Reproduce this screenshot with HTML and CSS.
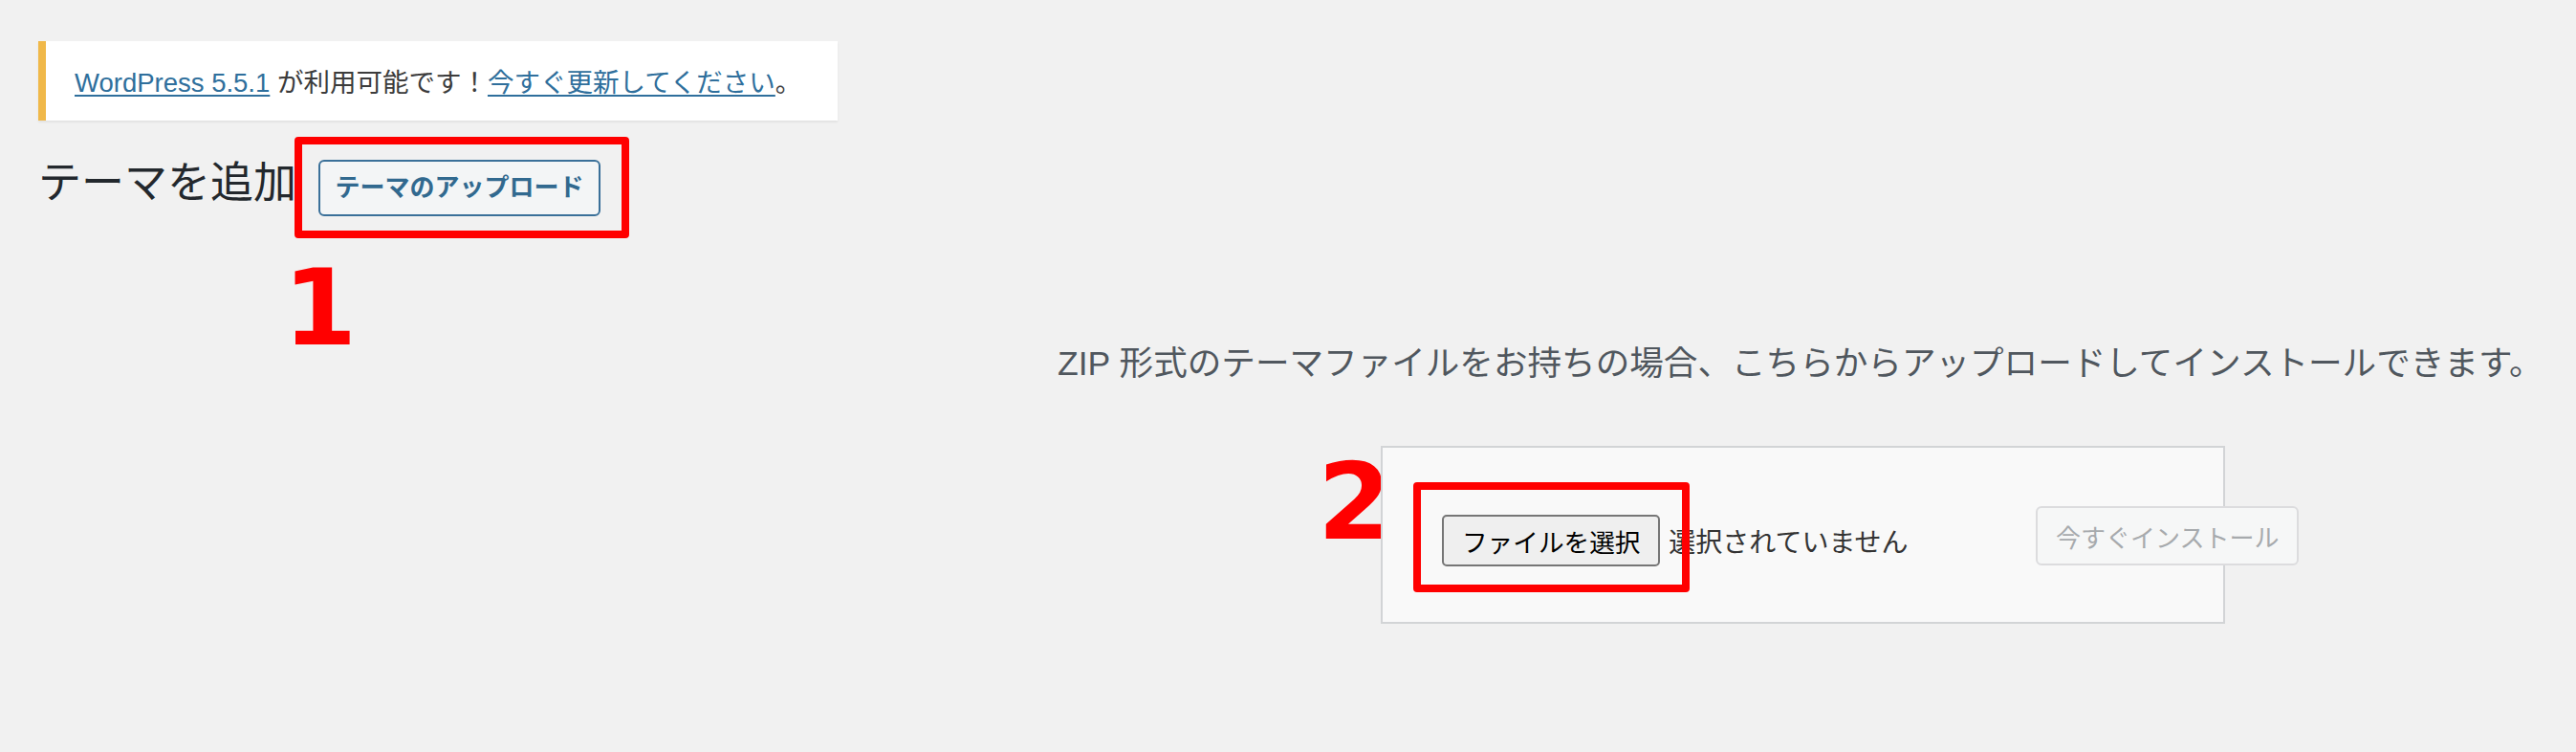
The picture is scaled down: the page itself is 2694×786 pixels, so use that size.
FILE: index.html
```html
<!DOCTYPE html>
<html lang="ja">
<head>
<meta charset="utf-8">
<title>テーマを追加</title>
<link rel="stylesheet" href="styles.css">
</head>
<body>
<div class="wrap">
  <div class="notice"><a href="#">WordPress 5.5.1</a> が利用可能です！<a href="#">今すぐ更新してください</a>。</div>
  <div class="title-row">
    <h1>テーマを追加</h1>
    <div class="mark"><a class="title-action" href="#">テーマのアップロード</a></div>
  </div>
  <div class="step step-1">1</div>
  <div class="upload">
    <p class="install-help">ZIP 形式のテーマファイルをお持ちの場合、こちらからアップロードしてインストールできます。</p>
    <div class="form-row">
      <span class="step step-2">2</span>
      <form class="upload-form">
        <div class="file-field">
          <button type="button" class="file-btn">ファイルを選択</button>
          <span class="file-status">選択されていません</span>
          <span class="file-mark"></span>
        </div>
        <button type="button" class="install-btn" disabled>今すぐインストール</button>
      </form>
    </div>
  </div>
</div>
</body>
</html>
```

FILE: styles.css
```css
html, body {
  margin: 0;
  padding: 0;
}
body {
  background: #f1f1f1;
  font-family: "Liberation Sans", "Noto Sans CJK JP", sans-serif;
  color: #444;
  width: 2694px;
  height: 786px;
  overflow: hidden;
}
.wrap {
  padding: 43px 0 0 40px;
}
.notice {
  display: inline-block;
  background: #fff;
  border-left: 8px solid #f0b849;
  box-shadow: 0 2px 2px rgba(0, 0, 0, 0.06);
  font-size: 27.5px;
  line-height: 41px;
  padding: 23px 38px 19px 30px;
  color: #3c3c3c;
  white-space: nowrap;
}
.notice a {
  color: #2f6f9c;
  text-decoration: underline;
  text-underline-offset: 3px;
  text-decoration-thickness: 2px;
}
.title-row {
  display: flex;
  align-items: flex-start;
  margin-top: 17px;
}
.title-row h1 {
  margin: 19px 0 0 0;
  font-size: 45px;
  font-weight: 400;
  line-height: 60px;
  color: #23282d;
}
.mark {
  margin-left: -2px;
  border: 8px solid #ff0000;
  border-radius: 4px;
  padding: 16px 22px 15px 17px;
}
.title-action {
  display: block;
  height: 55px;
  line-height: 55px;
  padding: 0 15.5px;
  border: 2px solid #3a7099;
  border-radius: 6px;
  background: #f3f5f6;
  color: #31698f;
  font-size: 26px;
  font-weight: 700;
  text-decoration: none;
  white-space: nowrap;
}
.step {
  font-family: "DejaVu Sans", sans-serif;
  font-weight: 700;
  font-size: 111px;
  line-height: 111px;
  color: #ff0000;
}
.step-1 {
  margin: 17px 0 -22px 256px;
}
.install-help {
  margin: 0 0 0 1066px;
  font-size: 35.6px;
  line-height: 50px;
  color: #50575e;
  white-space: nowrap;
}
.form-row {
  display: flex;
  align-items: flex-start;
  margin: 61px 0 0 1338px;
}
.step-2 {
  display: block;
  margin: 3px -11px 0 0;
}
.upload-form {
  position: relative;
  box-sizing: border-box;
  width: 883px;
  height: 186px;
  margin: 0;
  background: #f9f9f9;
  border: 2px solid #d2d4d6;
  padding: 61px 0 0 62px;
  display: flex;
  align-items: flex-start;
}
.file-field {
  position: relative;
  flex: 0 0 621px;
  display: flex;
  align-items: center;
  margin-top: 9px;
}
.file-btn {
  box-sizing: border-box;
  width: 228px;
  height: 54px;
  padding: 0;
  border: 2px solid #767676;
  border-radius: 5px;
  background: #efefef;
  color: #000;
  font-family: "Liberation Sans", "Noto Sans CJK JP", sans-serif;
  font-size: 26.67px;
}
.file-status {
  margin-left: 9px;
  font-size: 28px;
  color: #333;
  white-space: nowrap;
}
.file-mark {
  position: absolute;
  left: -30px;
  top: -34px;
  width: 273px;
  height: 99px;
  border: 8px solid #ff0000;
  border-radius: 4px;
  pointer-events: none;
}
.install-btn {
  flex: 0 0 auto;
  box-sizing: border-box;
  width: 275px;
  height: 62px;
  padding: 0;
  border: 2px solid #dcdcde;
  border-radius: 6px;
  background: #f6f7f7;
  color: #a7aaad;
  font-family: "Liberation Sans", "Noto Sans CJK JP", sans-serif;
  font-size: 26px;
}
```
